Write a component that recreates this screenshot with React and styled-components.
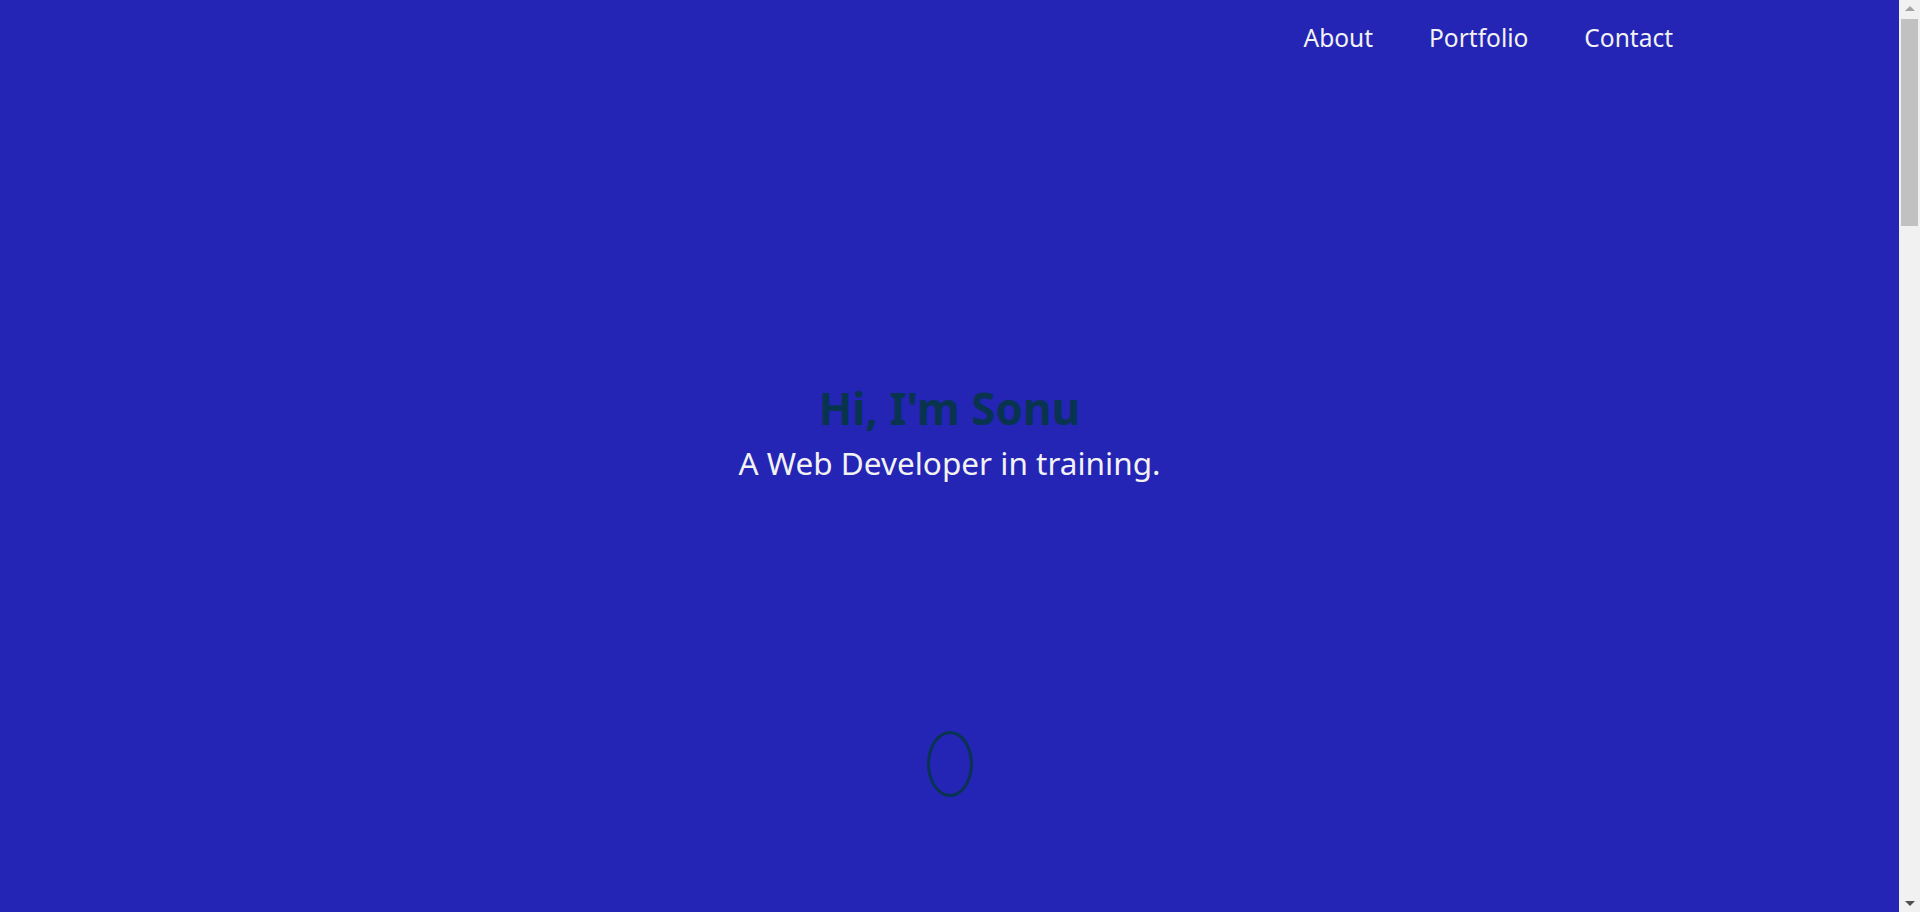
import styled, { createGlobalStyle } from "styled-components"

const GlobalStyle = createGlobalStyle`
    * {
        box-sizing: border-box;
    }
    html, body {
        margin: 0;
        height: 100%;
        overflow: hidden;
    }
    body {
        background-color: #2424b5;
        font-family: "Noto Sans", "Open Sans", sans-serif;
        color: #f2f2f2;
    }
`;

const links = ["About", "Portfolio", "Contact"];

const App = () => {
    return (
        <>
            <GlobalStyle />
            <Window>
                <Page>
                    <Header>
                        <Nav>
                            {links.map((l) => (
                                <NavLink key={l} href={`#${l.toLowerCase()}`}>{l}</NavLink>
                            ))}
                        </Nav>
                    </Header>
                    <Hero>
                        <Title>Hi, I'm Sonu</Title>
                        <Subtitle>A Web Developer in training.</Subtitle>
                        <ScrollMouse />
                    </Hero>
                    <Section id="about" />
                    <Section id="portfolio" />
                    <Section id="contact" />
                </Page>
                <ScrollRail>
                    <Arrow $up />
                    <Thumb />
                    <Arrow />
                </ScrollRail>
            </Window>
        </>
    )
}

const Window = styled.div`
    height: 100vh;
    display: flex;
    overflow: hidden;
`;

const Page = styled.main`
    flex: 1;
    min-width: 0;
    overflow: hidden;
    background-color: #2424b5;
`;

const Header = styled.header`
    height: 76px;
    display: flex;
    align-items: center;
    justify-content: flex-end;
    padding-right: 226px;
`;

const Nav = styled.nav`
    display: flex;
    align-items: center;
    gap: 56px;
`;

const NavLink = styled.a`
    color: #f2f2f2;
    text-decoration: none;
    font-size: 24.5px;
    line-height: 1;
`;

const Hero = styled.section`
    height: calc(100vh - 76px);
    display: flex;
    flex-direction: column;
    align-items: center;
    padding-top: 306px;
`;

const Title = styled.h1`
    margin: 0;
    font-size: 44px;
    font-weight: 700;
    line-height: 1.2;
    color: #08344f;
`;

const Subtitle = styled.p`
    margin: 8px 0 0;
    font-size: 31.5px;
    line-height: 1.3;
    color: #f2f2f2;
`;

const ScrollMouse = styled.div`
    width: 46px;
    height: 66px;
    margin-top: 247px;
    border: 3px solid #08344f;
    border-radius: 50%;
`;

const Section = styled.section`
    height: 980px;
`;

const ScrollRail = styled.div`
    width: 21px;
    flex-shrink: 0;
    background-color: #f1f1f1;
    display: flex;
    flex-direction: column;
    align-items: center;
`;

const Arrow = styled.div`
    height: 17px;
    width: 100%;
    display: flex;
    align-items: center;
    justify-content: center;
    margin-top: ${(p) => (p.$up ? "0" : "auto")};

    &::before {
        content: "";
        width: 0;
        height: 0;
        border-left: 5px solid transparent;
        border-right: 5px solid transparent;
        ${(p) =>
            p.$up
                ? "border-bottom: 5px solid #a3a3a3;"
                : "border-top: 5px solid #505050;"}
    }
`;

const Thumb = styled.div`
    width: 17px;
    height: 207px;
    margin-top: 2px;
    background-color: #c1c1c1;
`;

export default App;
